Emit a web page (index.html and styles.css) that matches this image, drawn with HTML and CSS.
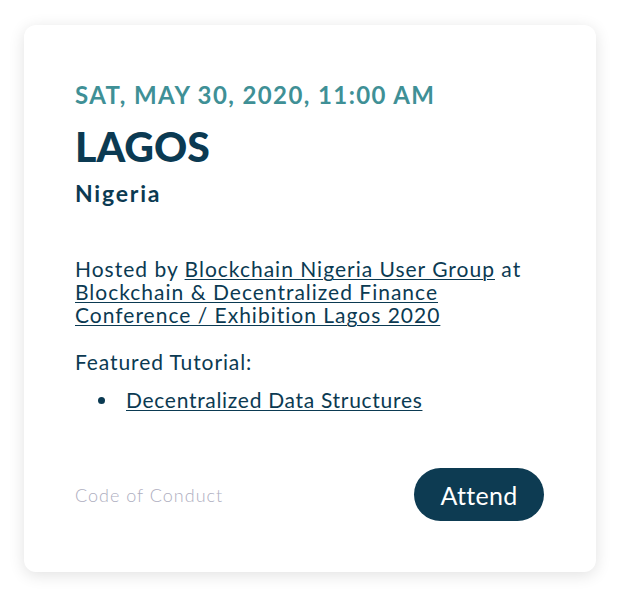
FILE: index.html
```html
<!DOCTYPE html>
<html lang="en">
<head>
<meta charset="utf-8">
<title>Event</title>
<link rel="stylesheet" href="styles.css">
</head>
<body>
<div class="card">
  <div class="date">SAT, MAY 30, 2020, 11:00 AM</div>
  <h1 class="city">LAGOS</h1>
  <div class="country">Nigeria</div>
  <p class="hosted">Hosted by <a href="#">Blockchain Nigeria User Group</a> at <a href="#">Blockchain &amp; Decentralized Finance Conference / Exhibition Lagos 2020</a></p>
  <p class="featured">Featured Tutorial:</p>
  <ul class="tutorials">
    <li class="tutorial"><a href="#">Decentralized Data Structures</a></li>
  </ul>
  <div class="footer">
    <a class="coc" href="#">Code of Conduct</a>
    <a class="attend" href="#">Attend</a>
  </div>
</div>
</body>
</html>
```
FILE: styles.css
```css
html, body {
  margin: 0;
  padding: 0;
  background: #ffffff;
}
body {
  font-family: Lato, "Open Sans", sans-serif;
  color: #0b3a52;
  padding: 25px 26px 28px 24px;
}
.card {
  width: 572px;
  box-sizing: border-box;
  background: #ffffff;
  border-radius: 12px;
  box-shadow: 0 3px 16px rgba(0, 0, 0, 0.12);
  padding: 56px 52px 51px 51px;
}
.date {
  font-size: 24px;
  line-height: 28px;
  font-weight: 700;
  letter-spacing: 1.4px;
  color: #3f9096;
  white-space: nowrap;
}
.city {
  margin: 14px 0 0;
  font-size: 41px;
  line-height: 48px;
  font-weight: 900;
  color: #0b3a52;
}
.country {
  margin-top: 9px;
  font-size: 23px;
  line-height: 26px;
  font-weight: 700;
  letter-spacing: 1.8px;
}
.hosted {
  margin: 51px 0 0;
  font-size: 21px;
  line-height: 23px;
  letter-spacing: 1px;
}
a {
  color: #0b3a52;
  text-decoration: underline;
  text-decoration-thickness: 1px;
  text-underline-offset: 2px;
}
.featured {
  margin: 24px 0 0;
  font-size: 21px;
  line-height: 23px;
  letter-spacing: 0.9px;
}
.tutorials {
  list-style: none;
  margin: 15px 0 0;
  padding: 0;
  font-size: 21px;
  line-height: 23px;
  letter-spacing: 0.7px;
}
.tutorial {
  display: flex;
  align-items: center;
}
.tutorial::before {
  content: "";
  width: 7px;
  height: 7px;
  border-radius: 50%;
  background: #0b3a52;
  margin: 2px 21px 0 23px;
  flex: none;
}
.footer {
  margin-top: 57px;
  display: flex;
  align-items: center;
  justify-content: space-between;
}
.coc {
  font-size: 18px;
  font-weight: 300;
  letter-spacing: 1px;
  color: #aeaec0;
  text-decoration: none;
}
.attend {
  display: flex;
  align-items: center;
  justify-content: center;
  width: 130px;
  height: 53px;
  border-radius: 27px;
  background: #0d3b52;
  color: #ffffff;
  font-size: 25px;
  letter-spacing: 0.3px;
  text-decoration: none;
}
```
